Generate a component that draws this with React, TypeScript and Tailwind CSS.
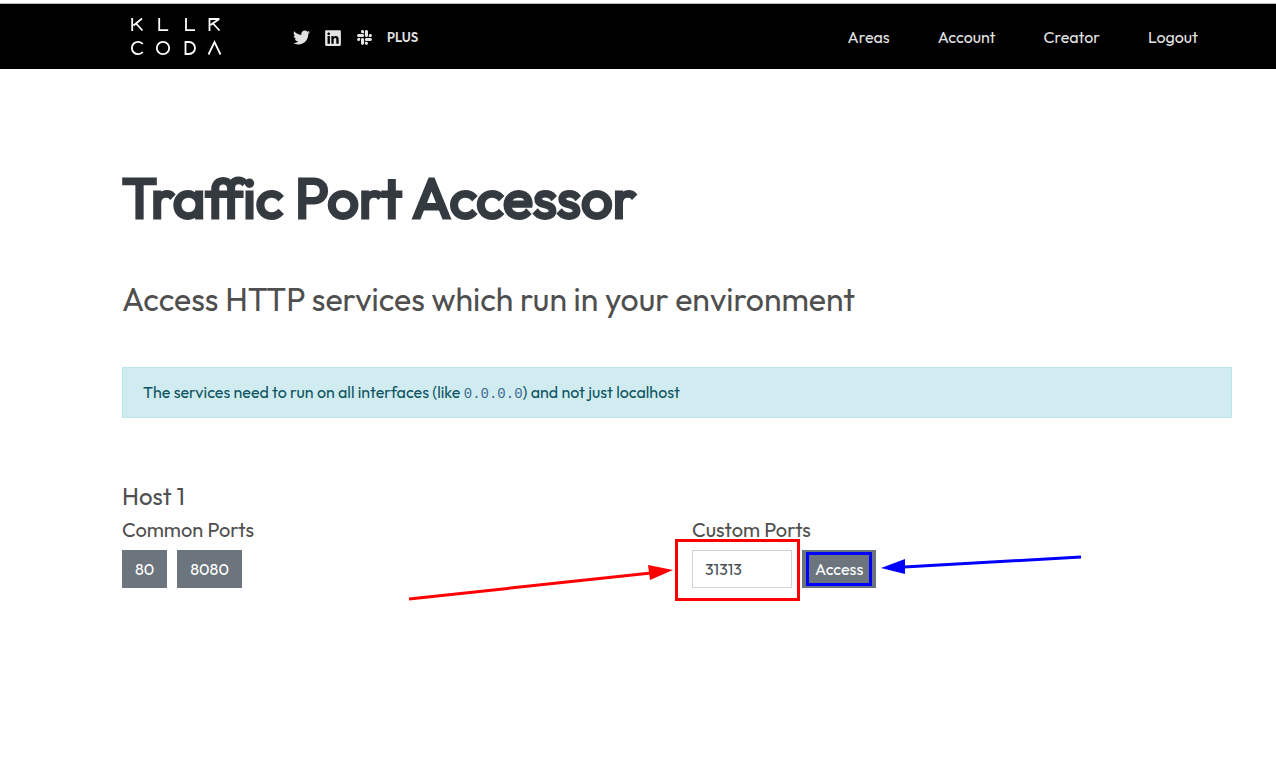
import { useState } from "react";
import { FaLinkedin, FaSlack, FaTwitter } from "react-icons/fa";

const links = ["Areas", "Account", "Creator", "Logout"];
const commonPorts = ["80", "8080"];

function Logo() {
  return (
    <svg
      width="92"
      height="40"
      viewBox="0 0 92 40"
      fill="none"
      stroke="#fff"
      strokeWidth="1.8"
      aria-hidden="true"
    >
      <path d="M2.200 1v13M12 1.500L3.500 8.500M6 6.500L12.500 13.500" />
      <path d="M29.200 1v12.200h9" />
      <path d="M56 1v12.200h9" />
      <path d="M79.500 14V2H89.500M88.500 2.500L80.500 8M83 6.500L89.500 13.500" />
      <path d="M12.800 27A6.200 6.200 0 1 0 12.800 35" />
      <circle cx="33" cy="31" r="6.200" />
      <path d="M55.500 25v12h3.500a6 6 0 0 0 0-12z" />
      <path d="M78.500 37.500L84.500 25L90.500 37.500" />
    </svg>
  );
}

function Header() {
  return (
    <header className="mt-[3px] flex items-center justify-between border-t border-[#b8b8b8] bg-black pr-[78px] pl-[130px] text-[#e3e3e3]">
      <div className="flex h-[65px] items-center">
        <a href="#home" aria-label="Killercoda">
          <Logo />
        </a>
        <div className="ml-[71px] flex items-center gap-[14px] pt-[2px]">
          <a href="#twitter" aria-label="Twitter">
            <FaTwitter size={17} />
          </a>
          <a href="#linkedin" aria-label="LinkedIn">
            <FaLinkedin size={18} />
          </a>
          <a href="#slack" aria-label="Slack">
            <FaSlack size={17} />
          </a>
          <a href="#plus" className="text-[13px] font-semibold">
            PLUS
          </a>
        </div>
      </div>
      <nav className="flex gap-12 text-[16px]">
        {links.map((link) => (
          <a key={link} href={`#${link.toLowerCase()}`}>
            {link}
          </a>
        ))}
      </nav>
    </header>
  );
}

function RedArrow() {
  return (
    <svg
      className="pointer-events-none absolute top-0 right-full mr-[18px]"
      width="266"
      height="54"
      viewBox="0 0 266 54"
      aria-hidden="true"
    >
      <path d="M1 49L243 23" stroke="#f00" strokeWidth="3" />
      <path d="M240 15L265 20L242 30z" fill="#f00" />
    </svg>
  );
}

function BlueArrow() {
  return (
    <svg
      className="pointer-events-none absolute top-0 left-full ml-1"
      width="202"
      height="30"
      viewBox="0 0 202 30"
      aria-hidden="true"
    >
      <path d="M24 17L201 7" stroke="#00f" strokeWidth="3" />
      <path d="M1 18L25 9V24z" fill="#00f" />
    </svg>
  );
}

export default function App() {
  const [port, setPort] = useState("31313");

  return (
    <div className="bg-white font-['Outfit','Lato',sans-serif] text-[#4f4f4f]">
      <Header />
      <main className="pt-[97px] pr-11 pb-20 pl-[122px]">
        <h1 className="text-[56px] leading-[64px] font-normal text-[#343a40] [-webkit-text-stroke:3px_#343a40]">
          Traffic Port Accessor
        </h1>
        <h2 className="mt-[49px] text-[32px] leading-[40px]">
          Access HTTP services which run in your environment
        </h2>
        <p className="mt-12 border border-[#bee5eb] bg-[#d1ecf1] px-5 py-3 text-[16px] leading-[25px] text-[#0c5460]">
          The services need to run on all interfaces (like{" "}
          <code className="font-['Liberation_Mono',monospace] text-[14px] leading-none text-[#3d6a92]">
            0.0.0.0
          </code>
          ) and not just localhost
        </p>

        <section className="mt-[62px]">
          <h3 className="text-[24px] leading-8">Host 1</h3>
          <div className="mt-[6px] grid grid-cols-2 gap-[30px]">
            <div>
              <h4 className="text-[20px] leading-6">Common Ports</h4>
              <div className="mt-2 flex gap-[10px]">
                {commonPorts.map((value) => (
                  <button
                    key={value}
                    type="button"
                    className="h-[38px] bg-[#6c757d] px-[13px] text-[16px] text-white"
                  >
                    {value}
                  </button>
                ))}
              </div>
            </div>
            <div>
              <h4 className="text-[20px] leading-6">
                <label htmlFor="custom-port">Custom Ports</label>
              </h4>
              <form className="mt-2 flex gap-[10px]" onSubmit={(event) => event.preventDefault()}>
                <div className="relative">
                  <input
                    id="custom-port"
                    value={port}
                    onChange={(event) => setPort(event.target.value)}
                    className="block h-[38px] w-[100px] border border-[#ced4da] px-3 text-[16px] text-[#495057]"
                  />
                  <div className="pointer-events-none absolute -top-[11px] -right-2 -bottom-[13px] -left-[17px] border-3 border-[#f00]" />
                  <RedArrow />
                </div>
                <div className="relative">
                  <button
                    type="submit"
                    className="block h-[38px] bg-[#6c757d] px-[13px] text-[16px] text-white"
                  >
                    Access
                  </button>
                  <div className="pointer-events-none absolute inset-x-1 inset-y-[2px] border-3 border-[#00f]" />
                  <BlueArrow />
                </div>
              </form>
            </div>
          </div>
        </section>
      </main>
    </div>
  );
}
